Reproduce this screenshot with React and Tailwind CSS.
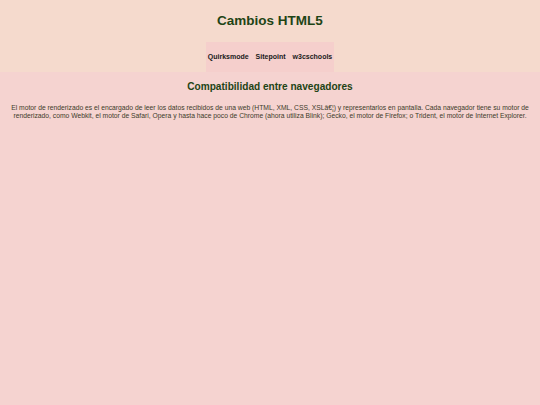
export default function App() {
  return (
    <div className="min-h-[405px] bg-[#f5d3d0] font-['Liberation_Sans',Arial,sans-serif]">
      {/* Cabecera */}
      <header className="bg-[#f5dacd] flex flex-col items-center">
        <h1 className="pt-[12px] h-[42px] text-[13.5px] leading-[17px] font-bold text-[#1e4415]">
          Cambios HTML5
        </h1>
        <nav className="bg-[#f5cfcc] h-[30px] px-[2px] flex items-center gap-[7px] text-[7px] font-bold text-[#1a1a1a]">
          <a href="#">Quirksmode</a>
          <a href="#">Sitepoint</a>
          <a href="#">w3cschools</a>
        </nav>
      </header>

      {/* Contenido */}
      <main className="px-[4px] text-center">
        <h2 className="pt-[8px] text-[10.1px] leading-[13px] font-bold text-[#1e4415]">
          Compatibilidad entre navegadores
        </h2>
        <p className="mt-[11px] text-[6.75px] leading-[8px] text-[#3d3b2a]">
          El motor de renderizado es el encargado de leer los datos recibidos de una web (HTML, XML, CSS, XSLâ€¦) y representarlos en pantalla. Cada navegador tiene su motor de renderizado, como Webkit, el motor de Safari, Opera y hasta hace poco de Chrome (ahora utiliza Blink); Gecko, el motor de Firefox; o Trident, el motor de Internet Explorer.
        </p>
      </main>
    </div>
  );
}
